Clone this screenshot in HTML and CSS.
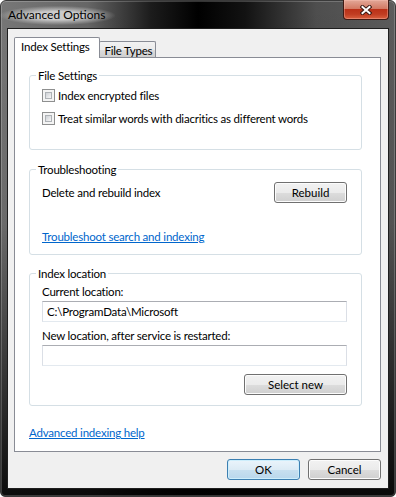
FILE: index.html
```html
<!DOCTYPE html>
<html lang="en">
<head>
    <meta charset="UTF-8">
    <meta name="viewport" content="width=device-width, initial-scale=1.0">
    <title>Advanced Options</title>
    <link rel="stylesheet" href="styles.css">
</head>
<body>
    <div class="window">
        <div class="titlebar">
            <span class="title">Advanced Options</span>
            <div class="close">
                <svg width="12" height="10" viewBox="0 0 12 10">
                    <path d="M2.5 2 L9.5 8 M9.5 2 L2.5 8" stroke="#3a1a14" stroke-width="4" stroke-linecap="square"/>
                    <path d="M2.5 2 L9.5 8 M9.5 2 L2.5 8" stroke="#fff" stroke-width="2" stroke-linecap="square"/>
                </svg>
            </div>
        </div>
        <div class="client">
            <div class="tabs">
                <div class="tab active">Index Settings</div>
                <div class="tab">File Types</div>
            </div>
            <div class="panel">
                <fieldset class="group settings">
                    <legend>File Settings</legend>
                    <label class="check first"><span class="box"></span>Index encrypted files</label>
                    <label class="check second"><span class="box"></span>Treat similar words with diacritics as different words</label>
                </fieldset>
                <fieldset class="group trouble">
                    <legend>Troubleshooting</legend>
                    <div class="row">
                        <span>Delete and rebuild index</span>
                        <button class="btn">Rebuild</button>
                    </div>
                    <a class="link trouble-link" href="#">Troubleshoot search and indexing</a>
                </fieldset>
                <fieldset class="group location">
                    <legend>Index location</legend>
                    <div class="label current">Current location:</div>
                    <div class="field">C:\ProgramData\Microsoft</div>
                    <div class="label next">New location, after service is restarted:</div>
                    <div class="field"></div>
                    <div class="actions">
                        <button class="btn wide">Select new</button>
                    </div>
                </fieldset>
                <a class="link help" href="#">Advanced indexing help</a>
            </div>
            <div class="footer">
                <button class="btn default">OK</button>
                <button class="btn">Cancel</button>
            </div>
        </div>
    </div>
</body>
</html>
```

FILE: styles.css
```css
body {
    margin: 0;
    background: #fff;
    font-family: 'Lato', 'Liberation Sans', sans-serif;
    font-size: 11.5px;
    letter-spacing: -0.2px;
    color: #000;
}
.window {
    width: 396px;
    height: 497px;
    box-sizing: border-box;
    border: 1px solid #3a3a3a;
    border-radius: 6px 6px 5px 5px;
    padding: 0 6px 7px 6px;
    display: flex;
    flex-direction: column;
    background:
        linear-gradient(to bottom, rgba(0, 0, 0, 0) 0%, rgba(0, 0, 0, 0.1) 45%, rgba(0, 0, 0, 0.9) 100%),
        linear-gradient(to right, #777 0%, #666 22%, #1c1c1c 38%, #000 50%, #121212 62%, #4e4e4e 80%, #5c5c5c 100%);
    box-shadow: inset 0 0 0 1px rgba(255, 255, 255, 0.2);
}
.titlebar {
    height: 27px;
    display: flex;
    justify-content: space-between;
    align-items: flex-start;
    padding-left: 1px;
}
.title {
    margin-top: 5px;
    margin-left: -8px;
    padding: 1px 10px 2px 8px;
    font-size: 12px;
    letter-spacing: 0;
    line-height: 16px;
    color: #000;
    background: radial-gradient(ellipse at center, rgba(235, 235, 235, 0.75) 30%, rgba(200, 200, 200, 0) 72%);
}
.close {
    width: 46px;
    height: 20px;
    box-sizing: border-box;
    margin-top: -1px;
    border: 1px solid #3f1a14;
    border-top: none;
    border-radius: 0 0 4px 4px;
    display: flex;
    align-items: center;
    justify-content: center;
    background: linear-gradient(to bottom, #e3a898 0%, #d37a64 45%, #bb3118 50%, #c13d22 75%, #d9603f 100%);
    box-shadow: inset 0 0 0 1px rgba(255, 200, 190, 0.35);
}
.client {
    flex: 1;
    display: flex;
    flex-direction: column;
    background: #f0f0f0;
    border: 1px solid #1e1e1e;
    padding: 8px 7px 0 6px;
}
.tabs {
    display: flex;
    align-items: flex-end;
    height: 20px;
}
.tab {
    height: 16px;
    box-sizing: border-box;
    border: 1px solid #898c95;
    border-bottom: none;
    border-radius: 2px 2px 0 0;
    padding: 0 3px 0 4px;
    margin-left: -1px;
    line-height: 17px;
    background: linear-gradient(to bottom, #f2f2f2 0%, #ebebeb 50%, #dddddd 50%, #cfcfcf 100%);
}
.tab.active {
    height: 21px;
    margin-left: 0;
    margin-bottom: -1px;
    padding: 0 10px 0 6px;
    line-height: 18px;
    background: #fff;
    position: relative;
    z-index: 1;
}
.panel {
    flex: 1;
    background: #fff;
    border: 1px solid #898c95;
    padding: 10px 18px 0 14px;
}
.group {
    margin: 0;
    min-width: 0;
    border: 1px solid #d5dfe5;
    border-radius: 3px;
    padding: 0 14px 0 12px;
}
.group legend {
    padding: 0 2px;
    margin-left: -6px;
    line-height: 15px;
}
.settings {
    padding-bottom: 23px;
}
.trouble {
    margin-top: 12px;
    padding-bottom: 10px;
}
.location {
    margin-top: 11px;
    padding-bottom: 10px;
}
.check {
    display: flex;
    align-items: center;
    height: 15px;
}
.check.first {
    margin-top: 5px;
}
.check.second {
    margin-top: 8px;
}
.box {
    width: 13px;
    height: 13px;
    box-sizing: border-box;
    border: 1px solid #8e8f8f;
    padding: 2px;
    margin-right: 3px;
    background: #f4f4f4;
}
.box::before {
    content: "";
    display: block;
    width: 100%;
    height: 100%;
    box-sizing: border-box;
    border: 1px solid #aeb2b6;
    background: linear-gradient(135deg, #cdd1d6 0%, #e6e7e9 60%, #f7f7f7 100%);
}
.row {
    margin-top: 5px;
    display: flex;
    justify-content: space-between;
    align-items: center;
    line-height: 15px;
}
.link {
    display: block;
    width: fit-content;
    line-height: 15px;
    color: #0066cc;
    text-decoration: underline;
}
.trouble-link {
    margin-top: 26px;
}
.help {
    margin-top: 19px;
}
.label {
    line-height: 15px;
}
.label.current {
    margin-top: 3px;
}
.label.next {
    margin-top: 6px;
}
.field {
    margin-top: 2px;
    height: 21px;
    box-sizing: border-box;
    border: 1px solid #dbdfe6;
    border-top-color: #abadb3;
    border-bottom-color: #e3e9ef;
    padding-left: 4px;
    line-height: 19px;
    background: #fff;
}
.actions {
    margin-top: 8px;
    display: flex;
    justify-content: flex-end;
}
.btn {
    width: 73px;
    height: 21px;
    box-sizing: border-box;
    padding: 0;
    font: inherit;
    color: #000;
    border: 1px solid #707070;
    border-radius: 3px;
    background: linear-gradient(to bottom, #f2f2f2 0%, #ebebeb 50%, #dddddd 50%, #cfcfcf 100%);
    box-shadow: inset 0 0 0 1px #fcfcfc;
}
.btn.wide {
    width: 103px;
}
.btn.default {
    border-color: #3c7fb1;
    background: linear-gradient(to bottom, #eaf4fb 0%, #dcebf5 50%, #c8e0f0 50%, #b9d7ec 100%);
    box-shadow: inset 0 0 0 1px #cdeefc;
}
.footer {
    display: flex;
    justify-content: flex-end;
    gap: 8px;
    padding: 7px 0 8px;
}
```
